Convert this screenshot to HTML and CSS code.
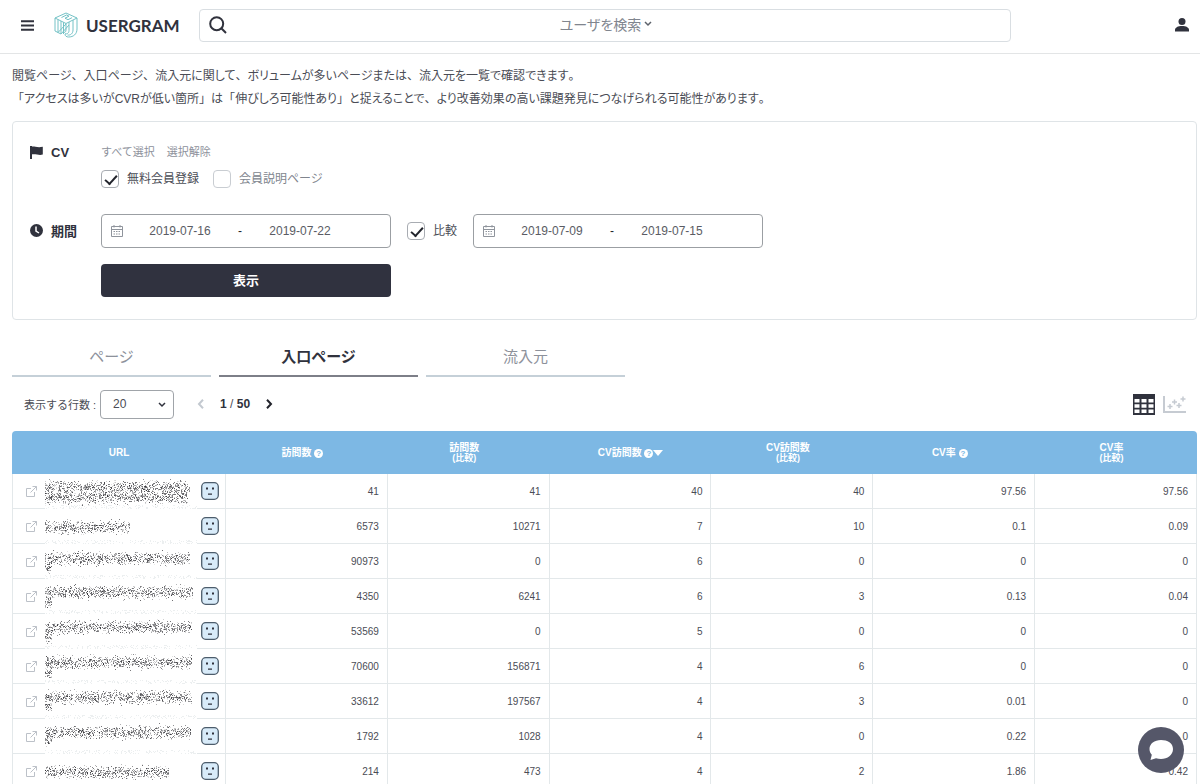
FILE: index.html
```html
<!DOCTYPE html>
<html lang="ja">
<head>
  <meta charset="UTF-8" />
  <meta name="viewport" content="width=device-width, initial-scale=1.0"/>
  <title>USERGRAM</title>
  <link rel="stylesheet" href="styles.css">
</head>
<body>
  <header class="header">
    <button class="icon-btn menu-btn" type="button" aria-label="メニュー">
      <svg width="13" height="11" viewBox="0 0 13 11"><path d="M0 1.2h13M0 5.5h13M0 9.8h13" stroke="#30323d" stroke-width="2"/></svg>
    </button>
    <a class="logo" href="#">
      <svg width="24" height="26" viewBox="0 0 24 26" fill="none" stroke="#74c2c6" stroke-width="1" stroke-linejoin="round">
        <path d="M12 1 1 6v13l3 1.500M12 1l11 5v11c0 5-3.500 8-8.500 8-2 0-3.500-1-3.500-3"/>
        <path d="M1 6l11 5.500L23 6M12 11.500V18c0 2-1.500 3-3 2"/>
        <path d="M7.500 5.500l5-2.500 2.500 1.200-4 2 3 1.500 4-2"/>
        <path d="M4 7.500v13l3 1.500V9M9.500 10.300V22M15 10v8.500c0 2.500-2 4-4 3M19 8v10c0 3.500-2.500 5.500-5.500 5"/>
        <path d="M4 20.500 12 12M7 22l8-9"/>
      </svg>
      <span>USERGRAM</span>
    </a>
    <div class="search">
      <svg width="18" height="18" viewBox="0 0 18 18" fill="none" stroke="#30323d" stroke-width="2"><circle cx="7.700" cy="7.700" r="6.500"/><path d="M12.300 12.300 17 17"/></svg>
      <button class="search-type" type="button">ユーザを検索
        <svg width="8" height="6" viewBox="0 0 8 6"><path d="M1 1l3 3 3-3" fill="none" stroke="#5d626b" stroke-width="1.500"/></svg>
      </button>
    </div>
    <button class="icon-btn" type="button" aria-label="アカウント">
      <svg width="14" height="14" viewBox="0 0 14 14" fill="#30323d"><circle cx="7" cy="3.600" r="3.500"/><path d="M0 13.500v-1.500c0-2.500 3-4 7-4s7 1.500 7 4v1.500z"/></svg>
    </button>
  </header>

  <main class="main">
    <p class="intro">閲覧ページ<i>、</i>入口ページ<i>、</i>流入元に関して<i>、</i>ボリュームが多いページまたは<i>、</i>流入元を一覧で確認できます<i>。</i><br><i>「</i>アクセスは多いがCVRが低い箇所<i>」</i>は<i>「</i>伸びしろ可能性あり<i>」</i>と捉えることで<i>、</i>より改善効果の高い課題発見につなげられる可能性があります<i>。</i></p>

    <form class="panel" onsubmit="return false">
      <div class="panel-title cv-title">
        <svg width="13" height="13" viewBox="0 0 13 13" fill="#30323d"><path d="M0 0h2v13H0z"/><path d="M1 .8c3-1.300 5 1.200 11.800 0v7.700c-4 1.300-6.800-1-11.800 0z"/></svg>
        CV
      </div>
      <div class="cv">
        <div class="links"><a href="#">すべて選択</a><a href="#">選択解除</a></div>
        <div class="checks">
          <label class="check"><input type="checkbox" checked>無料会員登録</label>
          <label class="check off"><input type="checkbox">会員説明ページ</label>
        </div>
      </div>
      <div class="panel-title">
        <svg width="13" height="13" viewBox="0 0 13 13"><circle cx="6.500" cy="6.500" r="6.500" fill="#30323d"/><path d="M6 2.500v4.500l3 2" fill="none" stroke="#fff" stroke-width="1.500"/></svg>
        期間
      </div>
      <div class="period">
        <div class="range">
          <svg class="cal" width="12" height="12" viewBox="0 0 12 12" fill="none" stroke="#8f949c"><path d="M.5 1.500h11v10H.5zM.5 4.500h11M3 0v2.500M9 0v2.500"/><path d="M2.500 6.500h7M2.500 9h7" stroke-dasharray="1.500 1"/></svg>
          <input type="text" value="2019-07-16" aria-label="開始日">
          <span>-</span>
          <input type="text" value="2019-07-22" aria-label="終了日">
        </div>
        <label class="check"><input type="checkbox" checked>比較</label>
        <div class="range">
          <svg class="cal" width="12" height="12" viewBox="0 0 12 12" fill="none" stroke="#8f949c"><path d="M.5 1.500h11v10H.5zM.5 4.500h11M3 0v2.500M9 0v2.500"/><path d="M2.500 6.500h7M2.500 9h7" stroke-dasharray="1.500 1"/></svg>
          <input type="text" value="2019-07-09" aria-label="比較開始日">
          <span>-</span>
          <input type="text" value="2019-07-15" aria-label="比較終了日">
        </div>
      </div>
      <button class="submit" type="submit">表示</button>
    </form>

    <nav class="tabs">
      <a class="tab" href="#">ページ</a>
      <a class="tab active" href="#">入口ページ</a>
      <a class="tab" href="#">流入元</a>
    </nav>

    <div class="toolbar">
      <label for="rows">表示する行数 :</label>
      <div class="select">
        <select id="rows"><option>20</option><option>50</option><option>100</option></select>
        <svg width="8" height="6" viewBox="0 0 8 6"><path d="M1 1l3 3 3-3" fill="none" stroke="#30323d" stroke-width="1.500"/></svg>
      </div>
      <div class="pager">
        <button class="icon-btn" type="button" aria-label="前へ"><svg width="8" height="10" viewBox="0 0 8 10"><path d="M6 .8 2 5l4 4.200" fill="none" stroke="#c3c9d0" stroke-width="2"/></svg></button>
        <span><b>1</b> / <b>50</b></span>
        <button class="icon-btn" type="button" aria-label="次へ"><svg width="8" height="10" viewBox="0 0 8 10"><path d="M2 .8 6 5 2 9.200" fill="none" stroke="#22242c" stroke-width="2"/></svg></button>
      </div>
      <div class="views">
        <button class="icon-btn" type="button" aria-label="表">
          <svg width="22" height="21" viewBox="0 0 22 21"><path d="M0 0h22v21H0z" fill="#30323d"/><path d="M1.500 5h5v3.500h-5zM8.500 5h5v3.500h-5zM15.500 5h5v3.500h-5zM1.500 10.300h5v3.500h-5zM8.500 10.300h5v3.500h-5zM15.500 10.300h5v3.500h-5zM1.500 15.600h5v3.500h-5zM8.500 15.600h5v3.500h-5zM15.500 15.600h5v3.500h-5z" fill="#fff"/></svg>
        </button>
        <button class="icon-btn" type="button" aria-label="散布図">
          <svg width="23" height="17" viewBox="0 0 23 17" fill="none" stroke="#c6cbd2" stroke-width="1.500"><path d="M1 0v16h22" stroke-width="2"/><path d="M7 8v5M4.500 10.500h5M11.500 3.500v5M9 6h5M16 7v5M13.500 9.500h5M20 .5v5M17.500 3h5"/></svg>
        </button>
      </div>
    </div>

    <table class="table">
      <thead>
        <tr>
          <th class="url-col">URL</th>
          <th>訪問数 <i class="help">?</i></th>
          <th>訪問数<small>(比較)</small></th>
          <th class="sorted">CV訪問数 <i class="help">?</i><i class="sort"></i></th>
          <th>CV訪問数<small>(比較)</small></th>
          <th>CV率 <i class="help">?</i></th>
          <th>CV率<small>(比較)</small></th>
        </tr>
      </thead>
      <tbody id="tableBody"></tbody>
    </table>
  </main>

  <button class="chat" type="button" aria-label="チャット">
    <svg width="26" height="22" viewBox="0 0 26 22" fill="#fff"><path d="M13 1C6.500 1 1.500 4.800 1.500 10c0 2.300.9 4.300 2.300 5.800L2.500 21l5.500-1.800c1.600.6 3.200.8 5 .8 6.500 0 12-4 12-10S19.500 1 13 1z"/></svg>
  </button>

  <script src="script.js"></script>
</body>
</html>
```

FILE: styles.css
```css
* {
  box-sizing: border-box;
}
body {
  margin: 0;
  height: 100vh;
  overflow: hidden;
  font-family: "Liberation Sans", "Noto Sans CJK JP", sans-serif;
  font-size: 12px;
  color: #4a4c55;
  background-color: #fff;
}
a {
  color: inherit;
  text-decoration: none;
}
button, input, select {
  font: inherit;
  color: inherit;
}
svg {
  display: block;
  flex: none;
}
.icon-btn {
  padding: 0;
  border: none;
  background: none;
  cursor: pointer;
}

/* header */
.header {
  display: flex;
  align-items: center;
  height: 54px;
  padding: 0 11px 3px 21px;
  border-bottom: 1px solid #e3e5e6;
}
.logo {
  display: flex;
  align-items: center;
  gap: 8px;
  width: 144px;
  margin-left: 20px;
  font-family: Lato, sans-serif;
  font-size: 17px;
  font-weight: bold;
  color: #30323d;
}
.search {
  display: flex;
  align-items: center;
  flex: 1;
  height: 33px;
  margin: 0 164px 0 1px;
  padding: 0 9px;
  border: 1px solid #d9dee2;
  border-radius: 4px;
}
.search-type {
  display: flex;
  align-items: center;
  justify-content: center;
  flex: 1;
  gap: 3px;
  padding: 0 16px 2px 0;
  border: none;
  background: none;
  font-size: 14px;
  font-feature-settings: "palt";
  color: #80858e;
}

.main {
  padding: 0 3px 0 12px;
}
.intro {
  margin: 11px 0 10px;
  line-height: 23px;
  font-feature-settings: "palt";
}
/* punctuation keeps its full width */
.intro i {
  font-style: normal;
  font-feature-settings: normal;
}

/* filter panel */
.panel {
  display: grid;
  grid-template-columns: 71px 1fr;
  padding: 21px 17px 22px;
  border: 1px solid #dfe4e7;
  border-radius: 4px;
}
.panel-title {
  display: flex;
  align-items: center;
  gap: 8px;
  padding-bottom: 2px;
  font-size: 13px;
  font-weight: bold;
  color: #30323d;
}
.cv-title {
  height: 21px;
}
.cv {
  padding-bottom: 26px;
}
.links {
  display: flex;
  gap: 12px;
  margin-bottom: 9px;
  font-size: 11px;
  line-height: 18px;
  color: #8d919b;
}
.checks, .period {
  display: flex;
  align-items: center;
  gap: 16px;
}
.checks {
  gap: 14px;
}
.check {
  display: flex;
  align-items: center;
  gap: 8px;
  line-height: 18px;
}
.check.off {
  color: #80858e;
}
.check input {
  position: relative;
  width: 18px;
  height: 18px;
  margin: 0;
  appearance: none;
  border: 1px solid #a8acb2;
  border-radius: 4px;
  background-color: #fff;
}
.check.off input {
  border-color: #c9cdd2;
}
.check input:checked::before {
  content: "";
  position: absolute;
  left: 3px;
  top: 4px;
  width: 10px;
  height: 5px;
  border-left: 2px solid #22242c;
  border-bottom: 2px solid #22242c;
  transform: rotate(-48deg);
}
.range {
  display: flex;
  align-items: center;
  width: 290px;
  height: 34px;
  padding: 0 9px;
  border: 1px solid #9b9fa3;
  border-radius: 4px;
  color: #5a5c64;
}
.range input {
  width: 114px;
  padding: 0;
  border: none;
  outline: none;
  background: none;
  text-align: center;
}
.range span {
  width: 6px;
  text-align: center;
  color: #22242c;
}
.submit {
  grid-column: 2;
  width: 290px;
  height: 33px;
  margin-top: 16px;
  padding: 0 0 2px;
  border: none;
  border-radius: 4px;
  background-color: #30323f;
  font-size: 13px;
  font-weight: bold;
  color: #fff;
}

/* tabs */
.tabs {
  display: flex;
  gap: 8px;
  margin-top: 17px;
}
.tab {
  width: 199px;
  height: 40px;
  border-bottom: 2px solid #c5d0d8;
  font-size: 15px;
  line-height: 40px;
  text-align: center;
  color: #8d919b;
}
.tab.active {
  border-color: #7d7f88;
  font-weight: bold;
  color: #30323d;
}

/* toolbar */
.toolbar {
  display: flex;
  align-items: center;
  height: 54px;
  padding: 0 11px 0 12px;
}
.toolbar label {
  width: 76px;
  font-size: 11px;
  white-space: nowrap;
}
.select {
  position: relative;
}
.select select {
  display: block;
  width: 74px;
  height: 29px;
  padding: 0 12px;
  appearance: none;
  border: 1px solid #a0a4a9;
  border-radius: 4px;
  background-color: #fff;
}
.select svg {
  position: absolute;
  right: 8px;
  top: 12px;
}
.pager {
  display: flex;
  align-items: center;
  gap: 15px;
  margin-left: 23px;
}
.pager b {
  color: #30323d;
}
.views {
  display: flex;
  align-items: center;
  gap: 8px;
  margin-left: auto;
}

/* table */
.table {
  width: 100%;
  table-layout: fixed;
  border-spacing: 0;
  font-size: 10px;
}
th {
  height: 43px;
  padding: 0 9px 0 0;
  background-color: #7db8e4;
  color: #fff;
  line-height: 11px;
}
th:first-child {
  border-top-left-radius: 4px;
}
th:last-child {
  border-top-right-radius: 4px;
}
th small {
  display: block;
  font-size: 9px;
}
th.url-col, th.sorted {
  padding: 0;
}
.url-col {
  width: 214px;
}
.help {
  display: inline-block;
  width: 9px;
  height: 9px;
  border-radius: 50%;
  background-color: #fff;
  font-size: 8px;
  font-style: normal;
  line-height: 9px;
  color: #7db8e4;
}
.sort {
  display: inline-block;
  border: 5px solid transparent;
  border-top: 6px solid #fff;
  border-bottom: none;
}
td {
  height: 35px;
  padding: 0 8px;
  border-right: 1px solid #e3e8ea;
  border-bottom: 1px solid #e3e8ea;
  text-align: right;
}
td:first-child {
  padding: 0 7px 0 13px;
  border-left: 1px solid #e3e8ea;
}
.url {
  display: flex;
  align-items: center;
  height: 34px;
}
.url canvas {
  margin: 0 4px -1px 8px;
}

.chat {
  position: fixed;
  right: 16px;
  bottom: 11px;
  display: flex;
  align-items: center;
  justify-content: center;
  width: 46px;
  height: 46px;
  padding: 0;
  border: none;
  border-radius: 50%;
  background-color: #555769;
}
```

FILE: script.js
```js
// smudge: [start, end, y] for every masked line of the URL
const rows = [
  { values: ['41', '41', '40', '40', '97.56', '97.56'], smudge: [[0, 145, 13], [0, 143, 23]] },
  { values: ['6573', '10271', '7', '10', '0.1', '0.09'], smudge: [[0, 85, 18]] },
  { values: ['90973', '0', '6', '0', '0', '0'], smudge: [[0, 145, 14], [0, 7, 23]] },
  { values: ['4350', '6241', '6', '3', '0.13', '0.04'], smudge: [[0, 148, 13], [0, 7, 22]] },
  { values: ['53569', '0', '5', '0', '0', '0'], smudge: [[0, 147, 13], [0, 7, 22]] },
  { values: ['70600', '156871', '4', '6', '0', '0'], smudge: [[0, 147, 13], [0, 7, 23]] },
  { values: ['33612', '197567', '4', '3', '0.01', '0'], smudge: [[0, 147, 13], [0, 7, 22]] },
  { values: ['1792', '1028', '4', '0', '0.22', '0'], smudge: [[0, 146, 13], [0, 7, 21]] },
  { values: ['214', '473', '4', '2', '1.86', '0.42'], smudge: [[0, 124, 18]] }
];

const linkIcon = '<svg width="11" height="11" viewBox="0 0 11 11" fill="none" stroke="#bcc1c8"><path d="M5 2.500H.5v8h8V6M6.500.5h4v4M10.500.5 4.500 6.500"/></svg>';
const faceIcon = '<svg width="18" height="18" viewBox="0 0 18 18"><rect x=".7" y=".7" width="16.600" height="16.600" rx="4" fill="#d8ebf9" stroke="#4c5c6b" stroke-width="1.300"/><path d="M5 5.500h2v2H5zM11 5.500h2v2h-2zM7 11.500h4v1.200H7z" fill="#30323d"/></svg>';

let seed = 7;
function rand() {
  seed = (seed * 16807) % 2147483647;
  return seed / 2147483647;
}

function drawSmudge(canvas, lines) {
  const ctx = canvas.getContext('2d');
  ctx.fillStyle = '#fff';
  ctx.fillRect(0, 0, 152, 35);
  lines.forEach(([start, end, y]) => {
    for (let i = 0; i < (end - start) * 6; i++) {
      const x = start + Math.floor(rand() * (end - start));
      const dy = Math.round((rand() + rand() + rand() - 1.5) * 6);
      ctx.fillStyle = `rgba(40, 40, 45, ${0.1 + rand() * 0.6})`;
      ctx.fillRect(x, y + dy, 1, 1);
    }
  });
  // remains of the row border
  for (let i = 0; i < 150; i++) {
    ctx.fillStyle = '#eceff0';
    ctx.fillRect(Math.floor(rand() * 152), 31 + Math.floor(rand() * 4), 1, 1);
  }
}

const body = document.getElementById('tableBody');
rows.forEach(row => {
  const tr = document.createElement('tr');
  tr.innerHTML = '<td><div class="url">' + linkIcon + '<canvas width="152" height="35"></canvas>' + faceIcon + '</div></td>' +
    row.values.map(v => '<td>' + v + '</td>').join('');
  body.appendChild(tr);
  drawSmudge(tr.querySelector('canvas'), row.smudge);
});
```
